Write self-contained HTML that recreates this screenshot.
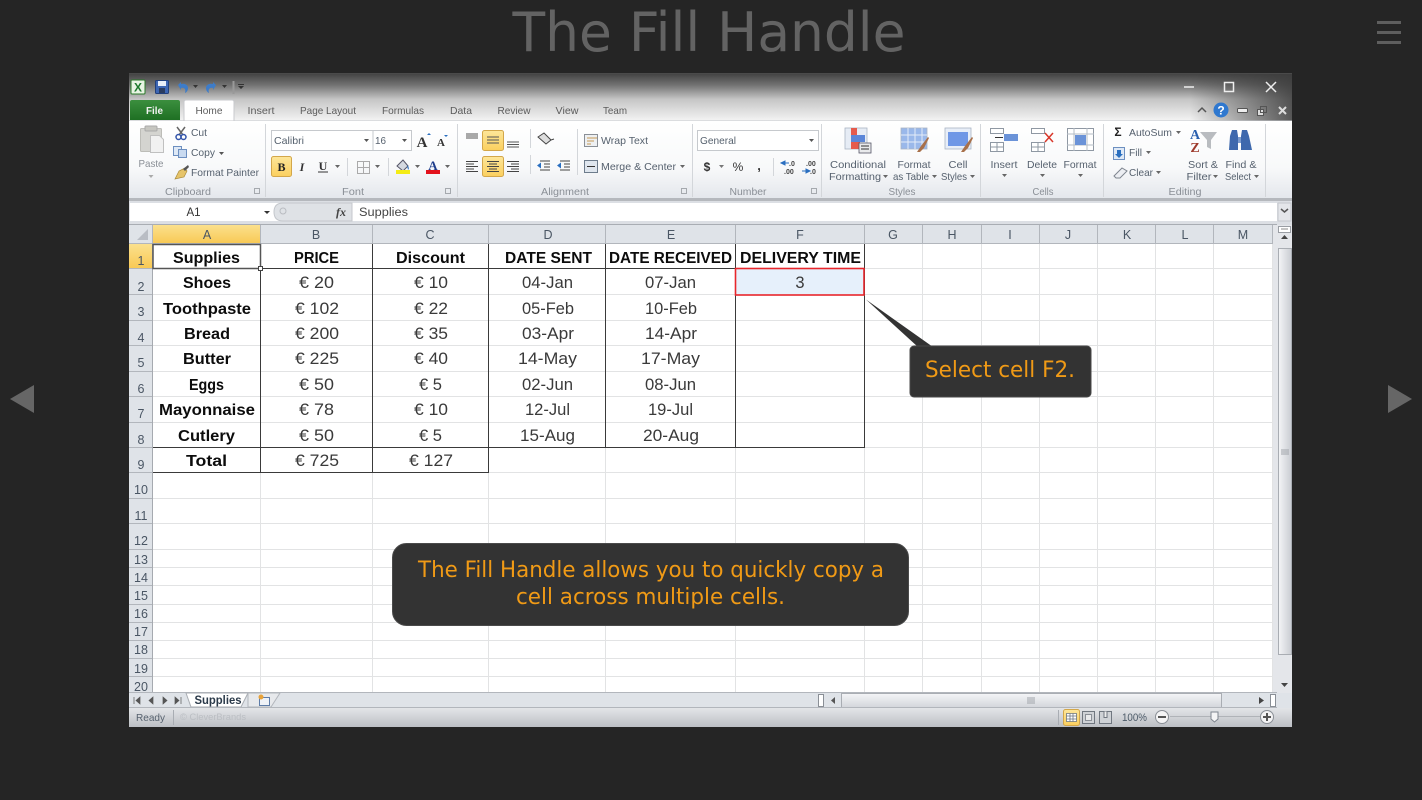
<!DOCTYPE html>
<html><head><meta charset="utf-8"><title>The Fill Handle</title>
<style>
html,body{margin:0;padding:0;background:#252525;width:1422px;height:800px;overflow:hidden}
svg{display:block;position:absolute;left:0;top:0;filter:blur(.3px)}
text{font-family:"Liberation Sans",sans-serif}
.c{font-size:16.5px;fill:#3a3a3a;text-anchor:middle}
.b{font-size:16px;font-weight:bold;fill:#0c0c0c;text-anchor:middle}
.r{font-size:10.5px;fill:#56616e}
.m{text-anchor:middle}
.g{font-size:10.5px;fill:#8a8f96;text-anchor:middle}
.h{font-size:12.5px;fill:#4a5664;text-anchor:middle}
.n{font-size:12.5px;fill:#4a5664;text-anchor:middle}
.t{font-size:10.5px;fill:#5c5c5c;text-anchor:middle}
.o{font-family:"DejaVu Sans",sans-serif;font-size:22px;fill:#f09a16;text-anchor:middle}
</style></head><body>
<svg width="1422" height="800" viewBox="0 0 1422 800" xmlns="http://www.w3.org/2000/svg">
<defs>
<linearGradient id="tb" x1="0" y1="0" x2="0" y2="1"><stop offset="0" stop-color="#404040"/><stop offset=".25" stop-color="#727272"/><stop offset=".55" stop-color="#c6c6c6"/><stop offset="1" stop-color="#f4f4f4"/></linearGradient>
<linearGradient id="sl" x1="0" y1="0" x2="1" y2="0"><stop offset="0" stop-color="#3c3c3c" stop-opacity="0"/><stop offset="1" stop-color="#3c3c3c" stop-opacity=".85"/></linearGradient>
<linearGradient id="rb" x1="0" y1="0" x2="0" y2="1"><stop offset="0" stop-color="#fff"/><stop offset=".6" stop-color="#f8f9fa"/><stop offset="1" stop-color="#e4e7ec"/></linearGradient>
<linearGradient id="st" x1="0" y1="0" x2="0" y2="1"><stop offset="0" stop-color="#e3e5e8"/><stop offset="1" stop-color="#bcbfc4"/></linearGradient>
<linearGradient id="yl" x1="0" y1="0" x2="0" y2="1"><stop offset="0" stop-color="#fde69a"/><stop offset="1" stop-color="#fbcf5e"/></linearGradient>
<linearGradient id="gr" x1="0" y1="0" x2="0" y2="1"><stop offset="0" stop-color="#3b8f3e"/><stop offset="1" stop-color="#1e6f23"/></linearGradient>
<linearGradient id="hy" x1="0" y1="0" x2="0" y2="1"><stop offset="0" stop-color="#fbe08d"/><stop offset="1" stop-color="#f8c853"/></linearGradient>
<linearGradient id="sb" x1="0" y1="0" x2="1" y2="0"><stop offset="0" stop-color="#f4f5f7"/><stop offset="1" stop-color="#c9ccd2"/></linearGradient>
<linearGradient id="hs" x1="0" y1="0" x2="0" y2="1"><stop offset="0" stop-color="#f4f5f7"/><stop offset="1" stop-color="#d3d6db"/></linearGradient>
</defs>

<rect width="1422" height="800" fill="#252525"/>
<text x="709" y="51" style="font-family:'DejaVu Sans',sans-serif;font-size:54px" fill="#636363" text-anchor="middle" textLength="393" lengthAdjust="spacingAndGlyphs">The Fill Handle</text>
<path d="M1377 21h24v3h-24zM1377 31h24v3h-24zM1377 41h24v3h-24z" fill="#5e5e5e"/>
<path d="M34 385v28L10 399z" fill="#666"/><path d="M1388 385v28l24-14z" fill="#666"/>

<!-- window -->
<rect x="129" y="73" width="1163" height="654" fill="#e4e6ea"/>
<rect x="129" y="73" width="1163" height="48" fill="url(#tb)"/>
<rect x="1190" y="73" width="102" height="48" fill="url(#sl)"/>
<rect x="129" y="73" width="1163" height="1" fill="#4a4a4a"/>

<!-- QAT -->
<rect x="131" y="80" width="14" height="14" rx="1" fill="#e8f4e4" stroke="#2a7a2a"/>
<text x="138" y="91.500" font-size="12" font-weight="bold" fill="#1c7a2c" class="m">X</text>
<rect x="155.500" y="80.500" width="13" height="13" rx="1" fill="#3d66b4" stroke="#22407c"/><rect x="158" y="81" width="8" height="5" fill="#e8eef8"/><rect x="159" y="88" width="6" height="5" fill="#2a3c60"/>
<path d="M178 85l3-3v2c4-1 7 1 7 4 0 2-1 4-3 5 1-3-0-6-4-5v2z" fill="#3d7cc9"/>
<path d="M216 85l-3-3v2c-4-1-7 1-7 4 0 2 1 4 3 5-1-3 0-6 4-5v2z" fill="#3d7cc9"/>
<path d="M193 85h5l-2.500 3zM222 85h5l-2.500 3z" fill="#333"/>
<path d="M233.500 81v13" stroke="#999" stroke-width="2"/><path d="M238 84h6v1h-6zM238 86h6l-3 3z" fill="#333"/>

<!-- window controls -->
<path d="M1184 87h10" stroke="#eee" stroke-width="1.500"/>
<rect x="1224.500" y="82.500" width="9" height="9" fill="none" stroke="#eee" stroke-width="1.500"/>
<path d="M1266 82l10 10M1276 82l-10 10" stroke="#eee" stroke-width="1.500"/>
<path d="M1198 112l4-4 4 4" fill="none" stroke="#555" stroke-width="1.500"/>
<circle cx="1221" cy="110" r="7.500" fill="#2f78cf"/><text x="1221" y="114.500" font-size="12" font-weight="bold" fill="#fff" class="m">?</text>
<rect x="1237.500" y="108.500" width="10" height="4" rx="1" fill="#eee" stroke="#555"/>
<rect x="1257.500" y="109.500" width="6" height="6" fill="#ddd" stroke="#555"/><rect x="1260.500" y="106.500" width="6" height="6" fill="none" stroke="#555"/>
<path d="M1279 107l7 7M1286 107l-7 7" stroke="#ddd" stroke-width="2"/>

<!-- tabs -->
<path d="M130 120v-18q0-2 2-2h46q2 0 2 2v18z" fill="url(#gr)"/>
<text x="154.500" y="114" font-size="10.500" font-weight="bold" fill="#f2f2f2" class="m" textLength="17" lengthAdjust="spacingAndGlyphs">File</text>
<rect x="129" y="120.500" width="1163" height="1" fill="#c4c7cc"/>
<path d="M184 121v-19q0-2 2-2h46q2 0 2 2v19z" fill="#fff" stroke="#c8cacd"/>
<text x="209" y="114" class="t" textLength="27" lengthAdjust="spacingAndGlyphs">Home</text>
<text x="261" y="114" class="t" textLength="27" lengthAdjust="spacingAndGlyphs">Insert</text>
<text x="328" y="114" class="t" textLength="56" lengthAdjust="spacingAndGlyphs">Page Layout</text>
<text x="403" y="114" class="t" textLength="42" lengthAdjust="spacingAndGlyphs">Formulas</text>
<text x="461" y="114" class="t" textLength="22" lengthAdjust="spacingAndGlyphs">Data</text>
<text x="514" y="114" class="t" textLength="33" lengthAdjust="spacingAndGlyphs">Review</text>
<text x="567" y="114" class="t" textLength="23" lengthAdjust="spacingAndGlyphs">View</text>
<text x="615" y="114" class="t" textLength="24" lengthAdjust="spacingAndGlyphs">Team</text>

<!-- ribbon -->
<rect x="129" y="121" width="1163" height="77" fill="url(#rb)"/>
<rect x="129" y="198" width="1163" height="3" fill="#b5b8bd"/>
<path d="M265.500 124v73M457.500 124v73M692.500 124v73M821.500 124v73M980.500 124v73M1103.500 124v73M1265.500 124v73" stroke="#d3d6da"/>
<text x="188" y="195" class="g" textLength="46" lengthAdjust="spacingAndGlyphs">Clipboard</text>
<text x="353" y="195" class="g" textLength="22" lengthAdjust="spacingAndGlyphs">Font</text>
<text x="565" y="195" class="g" textLength="48" lengthAdjust="spacingAndGlyphs">Alignment</text>
<text x="748" y="195" class="g" textLength="37" lengthAdjust="spacingAndGlyphs">Number</text>
<text x="902" y="195" class="g" textLength="27" lengthAdjust="spacingAndGlyphs">Styles</text>
<text x="1043" y="195" class="g" textLength="21" lengthAdjust="spacingAndGlyphs">Cells</text>
<text x="1185" y="195" class="g" textLength="33" lengthAdjust="spacingAndGlyphs">Editing</text>
<path d="M254.500 188.500h5v5h-5zM445.500 188.500h5v5h-5zM681.500 188.500h5v5h-5zM811.500 188.500h5v5h-5z" fill="none" stroke="#a5a9ae"/>

<!-- clipboard -->
<rect x="140.500" y="128.500" width="21" height="23" rx="1" fill="#d4d4d0" stroke="#bdbdb8"/><rect x="145" y="126" width="12" height="5" rx="1" fill="#c6c6c0" stroke="#aaa"/>
<path d="M150.500 135.500h9l4 4v13h-13z" fill="#f1f1f1" stroke="#c0c0c0"/>
<text x="151" y="167" class="g" textLength="25" lengthAdjust="spacingAndGlyphs">Paste</text><path d="M148.500 175h5l-2.500 3z" fill="#aaa"/>
<path d="M177 127l6 8M185 127l-6 8" stroke="#666" stroke-width="1.500"/><circle cx="178.500" cy="137" r="2.500" fill="none" stroke="#3355aa" stroke-width="1.500"/><circle cx="183.500" cy="137" r="2.500" fill="none" stroke="#3355aa" stroke-width="1.500"/>
<text x="191" y="136" class="r" textLength="16" lengthAdjust="spacingAndGlyphs">Cut</text>
<rect x="173.500" y="146.500" width="8" height="9" fill="#dfe9f6" stroke="#6d8fc0"/><rect x="178.500" y="149.500" width="8" height="8" fill="#c9daf0" stroke="#6d8fc0"/>
<text x="191" y="156" class="r" textLength="24" lengthAdjust="spacingAndGlyphs">Copy</text><path d="M219 152h5l-2.500 3z" fill="#555"/>
<path d="M175 179l4-8 6-3 2 3-3 6z" fill="#e6c46a" stroke="#a98b3a" stroke-width=".7"/><path d="M183 169l5-4 1 2-4 4z" fill="#555"/>
<text x="191" y="176" class="r" textLength="68" lengthAdjust="spacingAndGlyphs">Format Painter</text>

<!-- font -->
<rect x="271.500" y="130.500" width="140" height="20" fill="#fff" stroke="#c6c9cd"/><path d="M373 131v19" stroke="#c6c9cd"/>
<text x="274" y="144" class="r" textLength="30" lengthAdjust="spacingAndGlyphs">Calibri</text><path d="M364 139h5l-2.500 3z" fill="#555"/>
<text x="375" y="144" class="r" textLength="11" lengthAdjust="spacingAndGlyphs">16</text><path d="M402 139h5l-2.500 3z" fill="#555"/>
<text x="422" y="147" font-size="15" font-weight="bold" fill="#333" style="font-family:'Liberation Serif',serif" class="m">A</text><path d="M427 135l2-2 2 2z" fill="#2a6fc0"/>
<text x="441" y="146" font-size="11" font-weight="bold" fill="#333" style="font-family:'Liberation Serif',serif" class="m">A</text><path d="M444 135h4l-2 2z" fill="#2a6fc0"/>
<rect x="271.500" y="156.500" width="20" height="20" rx="2" fill="url(#yl)" stroke="#d3a74a"/>
<text x="281.500" y="171" font-size="12" font-weight="bold" fill="#222" style="font-family:'Liberation Serif',serif" class="m">B</text>
<text x="302" y="171" font-size="12" font-weight="bold" font-style="italic" fill="#333" style="font-family:'Liberation Serif',serif" class="m">I</text>
<text x="323" y="170" font-size="12" font-weight="bold" fill="#333" style="font-family:'Liberation Serif',serif" class="m">U</text><path d="M318 172h10" stroke="#333"/><path d="M335 165h5l-2.500 3zM375 165h5l-2.500 3zM415 165h5l-2.500 3zM445 165h5l-2.500 3z" fill="#666"/>
<path d="M347.500 158v18M388.500 158v18M530.500 129v19M530.500 155v19M577.500 129v46M773.500 158v18" stroke="#d3d6da"/>
<path d="M357.500 161.500h12v12h-12zM363.500 161.500v12M357.500 167.500h12" fill="none" stroke="#aaa"/>
<path d="M397 166l6-6 5 6-5 5z" fill="#d5d9e0" stroke="#556"/><path d="M407 165q3 3 1 5z" fill="#2a6fc0"/><rect x="396" y="170" width="14" height="4" fill="#f4ec15"/>
<text x="433" y="170" font-size="13" font-weight="bold" fill="#1e3e8c" style="font-family:'Liberation Serif',serif" class="m">A</text><rect x="426" y="170" width="14" height="4" fill="#e3121c"/>

<!-- alignment -->
<rect x="482.500" y="130.500" width="21" height="20" rx="2" fill="url(#yl)" stroke="#d3a74a"/>
<rect x="482.500" y="156.500" width="21" height="20" rx="2" fill="url(#yl)" stroke="#d3a74a"/>
<path d="M466 134h12M466 136h12M466 138h12M487 137h12M487 140h12M487 143h12M507 142h12M507 144.500h12M507 147h12" stroke="#555"/>
<path d="M466 161.500h12M466 164h8M466 166.500h12M466 169h8M466 171.500h12M487 161.500h12M489 164h8M487 166.500h12M489 169h8M487 171.500h12M507 161.500h12M511 164h8M507 166.500h12M511 169h8M507 171.500h12" stroke="#444"/>
<path d="M538 137l8 7 5-4-7-7zM551 140l3-1" fill="#ddd" stroke="#444"/>
<path d="M540 161h10M544 164h6M544 167h6M540 170h10M560 161h10M564 164h6M564 167h6M560 170h10" stroke="#444"/><path d="M537 165.500l4-3v6zM557 165.500l4-3v6z" fill="#2a6fc0"/>
<rect x="584.500" y="134.500" width="13" height="12" fill="#eef0f2" stroke="#8a8f96"/><path d="M587 138h10M587 141h7M587 144h4" stroke="#c69a55"/>
<text x="601" y="144" class="r" textLength="47" lengthAdjust="spacingAndGlyphs">Wrap Text</text>
<rect x="584.500" y="160.500" width="13" height="12" fill="#dfe6ee" stroke="#6d7c8c"/><path d="M587 166.500h8" stroke="#333"/>
<text x="601" y="170" class="r" textLength="75" lengthAdjust="spacingAndGlyphs">Merge &amp; Center</text><path d="M680 165h5l-2.500 3z" fill="#666"/>

<!-- number -->
<rect x="697.500" y="130.500" width="121" height="20" fill="#fff" stroke="#c6c9cd"/>
<text x="700" y="144" class="r" textLength="36" lengthAdjust="spacingAndGlyphs">General</text><path d="M809 139h5l-2.500 3z" fill="#555"/>
<text x="707" y="171" font-size="12" font-weight="bold" fill="#333" class="m">$</text><path d="M719 165h5l-2.500 3z" fill="#777"/>
<text x="738" y="171" font-size="12" fill="#333" class="m">%</text>
<text x="759" y="170" font-size="13" font-weight="bold" fill="#333" class="m">,</text>
<text x="789" y="166" font-size="7" font-weight="bold" fill="#444">.0</text><text x="784" y="174" font-size="7" font-weight="bold" fill="#444">.00</text><path d="M781 163l4-2v4zM785 163h4" stroke="#2a6fc0" fill="#2a6fc0"/>
<text x="806" y="166" font-size="7" font-weight="bold" fill="#444">.00</text><text x="810" y="174" font-size="7" font-weight="bold" fill="#444">.0</text><path d="M802 171h4M810 171l-4-2v4z" stroke="#2a6fc0" fill="#2a6fc0"/>

<!-- styles -->
<rect x="845" y="128" width="22" height="21" fill="#e6ecf5" stroke="#a9b4c4" stroke-width=".8"/>
<rect x="851" y="128" width="6" height="7" fill="#e55b4d"/><rect x="851" y="135" width="14" height="7" fill="#5b86d8"/><rect x="851" y="142" width="9" height="7" fill="#e55b4d"/>
<rect x="859" y="143" width="12" height="10" fill="#e9eaec" stroke="#556" stroke-width=".8"/><path d="M861 146h8M861 149h8" stroke="#333"/>
<text x="858" y="168" class="r m" textLength="56" lengthAdjust="spacingAndGlyphs">Conditional</text>
<text x="855" y="180" class="r m" textLength="52" lengthAdjust="spacingAndGlyphs">Formatting</text><path d="M883 175h5l-2.500 3z" fill="#666"/>
<rect x="901" y="128" width="26" height="21" fill="#9ab8ea" stroke="#a9b4c4" stroke-width=".8"/><path d="M901 135h26M901 142h26M908 128v21M915 128v21M922 128v21" stroke="#e4ecf8"/>
<path d="M917 152l4-6 7-9 1 1-5 10-4 4z" fill="#a8704a"/>
<text x="914" y="168" class="r m" textLength="33" lengthAdjust="spacingAndGlyphs">Format</text>
<text x="911" y="180" class="r m" textLength="36" lengthAdjust="spacingAndGlyphs">as Table</text><path d="M932 175h5l-2.500 3z" fill="#666"/>
<rect x="945" y="128" width="26" height="21" fill="#e8eef8" stroke="#a9b4c4" stroke-width=".8"/><rect x="948" y="132" width="20" height="14" fill="#6f97e6"/>
<path d="M961 152l4-6 7-9 1 1-5 10-4 4z" fill="#a8704a"/>
<text x="958" y="168" class="r m" textLength="19" lengthAdjust="spacingAndGlyphs">Cell</text>
<text x="954" y="180" class="r m" textLength="26" lengthAdjust="spacingAndGlyphs">Styles</text><path d="M970 175h5l-2.500 3z" fill="#666"/>

<!-- cells -->
<path d="M990.500 128.500h13v5h-13zM990.500 142.500h13v9h-13zM997 142.500v9M990.500 147h13" fill="#fff" stroke="#8f98a3"/><rect x="1004" y="134" width="14" height="7" fill="#6b93d8"/><path d="M995 137.500h8" stroke="#333"/>
<path d="M1031.500 128.500h13v5h-13zM1031.500 142.500h13v9h-13zM1038 142.500v9M1031.500 147h13" fill="#fff" stroke="#8f98a3"/><path d="M1045 133l8 9M1053 133l-8 9" stroke="#d9372a" stroke-width="1.500"/>
<rect x="1067.500" y="128.500" width="26" height="22" fill="#fff" stroke="#8f98a3"/><path d="M1067 134h27M1067 145h27M1074 128v23M1087 128v23" stroke="#b5bcc5"/><rect x="1075" y="135" width="11" height="10" fill="#6b93d8"/>
<text x="1004" y="168" class="r m" textLength="27" lengthAdjust="spacingAndGlyphs">Insert</text>
<text x="1042" y="168" class="r m" textLength="30" lengthAdjust="spacingAndGlyphs">Delete</text>
<text x="1080" y="168" class="r m" textLength="33" lengthAdjust="spacingAndGlyphs">Format</text>
<path d="M1002 174h5l-2.500 3zM1040 174h5l-2.500 3zM1078 174h5l-2.500 3z" fill="#666"/>

<!-- editing -->
<text x="1118" y="136" font-size="12" font-weight="bold" fill="#222" class="m">Σ</text>
<text x="1129" y="136" class="r" textLength="43" lengthAdjust="spacingAndGlyphs">AutoSum</text><path d="M1176 131h5l-2.500 3z" fill="#666"/>
<rect x="1113.500" y="147.500" width="11" height="12" fill="#dfe9f6" stroke="#6d8fc0"/><path d="M1117 150h4v4h2l-4 4-4-4h2z" fill="#2a6fc0"/>
<text x="1129" y="156" class="r" textLength="13" lengthAdjust="spacingAndGlyphs">Fill</text><path d="M1146 151h5l-2.500 3z" fill="#666"/>
<path d="M1114 176l8-8 5 3-7 7h-4z" fill="#eceef2" stroke="#7e858e"/>
<text x="1129" y="176" class="r" textLength="24" lengthAdjust="spacingAndGlyphs">Clear</text><path d="M1156 171h5l-2.500 3z" fill="#666"/>
<text x="1195" y="139" font-size="14" font-weight="bold" fill="#2a5fae" style="font-family:'Liberation Serif',serif" class="m">A</text>
<text x="1195" y="152" font-size="14" font-weight="bold" fill="#9e3a2c" style="font-family:'Liberation Serif',serif" class="m">Z</text>
<path d="M1200 132h17l-6 8v9l-4-2v-7z" fill="#b9bcc0"/>
<text x="1203" y="168" class="r m" textLength="30" lengthAdjust="spacingAndGlyphs">Sort &amp;</text>
<text x="1199" y="180" class="r m" textLength="25" lengthAdjust="spacingAndGlyphs">Filter</text><path d="M1213 175h5l-2.500 3z" fill="#666"/>
<path d="M1230 136l2-6h5l1 6v14h-9zM1241 136l1-6h5l2 6 3 14h-11z" fill="#3e68ad"/><rect x="1238" y="137" width="3" height="6" fill="#7c9bcd"/>
<text x="1241" y="168" class="r m" textLength="31" lengthAdjust="spacingAndGlyphs">Find &amp;</text>
<text x="1238" y="180" class="r m" textLength="26" lengthAdjust="spacingAndGlyphs">Select</text><path d="M1254 175h5l-2.500 3z" fill="#666"/>

<!-- formula bar -->
<rect x="129" y="201" width="1163" height="24" fill="#dcdfe4"/>
<rect x="130" y="203" width="1147" height="18" fill="#fff"/>
<path d="M264 211h6l-3 3z" fill="#333"/><text x="193.500" y="216" class="r" font-size="11.500" style="font-size:11.500px;fill:#333" text-anchor="middle">A1</text>
<path d="M352 203H283q-9 0-9 9t9 9h69z" fill="#dfe2e6" stroke="#c4c7cc"/><circle cx="283" cy="211" r="3" fill="none" stroke="#b9bcc1"/>
<text x="341" y="216" font-size="12" font-style="italic" font-weight="bold" fill="#444" style="font-family:'Liberation Serif',serif" class="m">fx</text>
<text x="359" y="216" font-size="11.500" fill="#444" textLength="49" lengthAdjust="spacingAndGlyphs">Supplies</text>
<path d="M1278 203h13v18h-13z" fill="#e4e6ea" stroke="#c4c7cc"/><path d="M1281 209l3.500 3 3.500-3" fill="none" stroke="#555" stroke-width="1.500"/>

<!-- sheet -->
<rect x="153" y="244" width="1124" height="449" fill="#fff"/>
<rect x="129" y="225" width="1148" height="19" fill="#dfe3e8"/>
<rect x="129" y="244" width="24" height="449" fill="#dfe3e8"/>
<path d="M148 229v11h-11z" fill="#b9bdc4"/>
<rect x="153" y="225" width="108" height="19" fill="url(#hy)"/>
<rect x="129" y="244" width="24" height="25" fill="url(#hy)"/>
<path d="M129 224.500h1148" stroke="#a9adb3"/>
<path d="M152.500 225v19M260.500 225v19M372.500 225v19M488.500 225v19M605.500 225v19M735.500 225v19M864.500 225v19M922.500 225v19M981.500 225v19M1039.500 225v19M1097.500 225v19M1155.500 225v19M1213.500 225v19M1272.500 225v19" stroke="#b2b6bc"/>
<path d="M129 243.500h1148" stroke="#b2b6bc"/>
<path d="M129 268.500h24M129 294.500h24M129 320.500h24M129 345.500h24M129 371.500h24M129 396.500h24M129 422.500h24M129 447.500h24M129 472.500h24M129 498.500h24M129 523.500h24M129 549.500h24M129 567.500h24M129 585.500h24M129 604.500h24M129 622.500h24M129 640.500h24M129 658.500h24M129 676.500h24" stroke="#b2b6bc"/>
<path d="M152.500 244v449" stroke="#a6aab0"/>
<!-- grid -->
<path d="M153 268.500h1124M153 294.500h1124M153 320.500h1124M153 345.500h1124M153 371.500h1124M153 396.500h1124M153 422.500h1124M153 447.500h1124M153 472.500h1124M153 498.500h1124M153 523.500h1124M153 549.500h1124M153 567.500h1124M153 585.500h1124M153 604.500h1124M153 622.500h1124M153 640.500h1124M153 658.500h1124M153 676.500h1124" stroke="#e2e3e4"/>
<path d="M260.500 244v449M372.500 244v449M488.500 244v449M605.500 244v449M735.500 244v449M864.500 244v449M922.500 244v449M981.500 244v449M1039.500 244v449M1097.500 244v449M1155.500 244v449M1213.500 244v449M1272.500 244v449" stroke="#e2e3e4"/>
<!-- table borders -->
<path d="M153 268.500h712M153 447.500h712M153 472.500h336M260.500 244v229M372.500 244v229M488.500 244v229M605.500 244v204M735.500 244v204M864.500 244v204" stroke="#3a3a3a" fill="none"/>
<rect x="736" y="269" width="128" height="26" fill="#e6f0fb"/>
<rect x="735.500" y="268.500" width="128.500" height="26.500" fill="none" stroke="#e8262c" stroke-width="1.600"/>
<rect x="153" y="244.500" width="107.500" height="24" fill="none" stroke="#555" stroke-width="1.500"/>
<rect x="258.500" y="266.500" width="4" height="4" fill="#fff" stroke="#444"/>

<!-- headers text -->
<text x="207" y="239" class="h">A</text><text x="316" y="239" class="h">B</text><text x="430" y="239" class="h">C</text><text x="548" y="239" class="h">D</text><text x="671" y="239" class="h">E</text><text x="800" y="239" class="h">F</text><text x="893" y="239" class="h">G</text><text x="952" y="239" class="h">H</text><text x="1010" y="239" class="h">I</text><text x="1068" y="239" class="h">J</text><text x="1127" y="239" class="h">K</text><text x="1185" y="239" class="h">L</text><text x="1243" y="239" class="h">M</text>
<text x="141" y="265" class="n">1</text><text x="141" y="291" class="n">2</text><text x="141" y="316" class="n">3</text><text x="141" y="342" class="n">4</text><text x="141" y="367" class="n">5</text><text x="141" y="393" class="n">6</text><text x="141" y="418" class="n">7</text><text x="141" y="444" class="n">8</text><text x="141" y="469" class="n">9</text><text x="141" y="494" class="n">10</text><text x="141" y="520" class="n">11</text><text x="141" y="545" class="n">12</text><text x="141" y="564" class="n">13</text><text x="141" y="582" class="n">14</text><text x="141" y="600" class="n">15</text><text x="141" y="618" class="n">16</text><text x="141" y="636" class="n">17</text><text x="141" y="654" class="n">18</text><text x="141" y="673" class="n">19</text><text x="141" y="691" class="n">20</text>

<!-- cells text -->
<text x="206.500" y="263" class="b" textLength="67" lengthAdjust="spacingAndGlyphs">Supplies</text>
<text x="316.500" y="263" class="b" textLength="45" lengthAdjust="spacingAndGlyphs">PRICE</text>
<text x="430.500" y="263" class="b" textLength="69" lengthAdjust="spacingAndGlyphs">Discount</text>
<text x="548.500" y="263" class="b" textLength="87" lengthAdjust="spacingAndGlyphs">DATE SENT</text>
<text x="670.500" y="263" class="b" textLength="123" lengthAdjust="spacingAndGlyphs">DATE RECEIVED</text>
<text x="800.500" y="263" class="b" textLength="121" lengthAdjust="spacingAndGlyphs">DELIVERY TIME</text>
<text x="207" y="288" class="b" textLength="48" lengthAdjust="spacingAndGlyphs">Shoes</text>
<text x="207" y="314" class="b" textLength="88" lengthAdjust="spacingAndGlyphs">Toothpaste</text>
<text x="207" y="339" class="b" textLength="46" lengthAdjust="spacingAndGlyphs">Bread</text>
<text x="207" y="364" class="b" textLength="48" lengthAdjust="spacingAndGlyphs">Butter</text>
<text x="206.500" y="390" class="b" textLength="35" lengthAdjust="spacingAndGlyphs">Eggs</text>
<text x="207" y="415" class="b" textLength="96" lengthAdjust="spacingAndGlyphs">Mayonnaise</text>
<text x="206.500" y="441" class="b" textLength="57" lengthAdjust="spacingAndGlyphs">Cutlery</text>
<text x="206.500" y="466" class="b" textLength="41" lengthAdjust="spacingAndGlyphs">Total</text>
<text x="316.500" y="288" class="c" textLength="35" lengthAdjust="spacingAndGlyphs">€ 20</text>
<text x="317" y="314" class="c" textLength="44" lengthAdjust="spacingAndGlyphs">€ 102</text>
<text x="317" y="339" class="c" textLength="44" lengthAdjust="spacingAndGlyphs">€ 200</text>
<text x="317" y="364" class="c" textLength="44" lengthAdjust="spacingAndGlyphs">€ 225</text>
<text x="316.500" y="390" class="c" textLength="35" lengthAdjust="spacingAndGlyphs">€ 50</text>
<text x="316.500" y="415" class="c" textLength="35" lengthAdjust="spacingAndGlyphs">€ 78</text>
<text x="316.500" y="441" class="c" textLength="35" lengthAdjust="spacingAndGlyphs">€ 50</text>
<text x="317" y="466" class="c" textLength="44" lengthAdjust="spacingAndGlyphs">€ 725</text>
<text x="431" y="288" class="c" textLength="34" lengthAdjust="spacingAndGlyphs">€ 10</text>
<text x="431" y="314" class="c" textLength="34" lengthAdjust="spacingAndGlyphs">€ 22</text>
<text x="431" y="339" class="c" textLength="34" lengthAdjust="spacingAndGlyphs">€ 35</text>
<text x="431" y="364" class="c" textLength="34" lengthAdjust="spacingAndGlyphs">€ 40</text>
<text x="430.500" y="390" class="c" textLength="23" lengthAdjust="spacingAndGlyphs">€ 5</text>
<text x="431" y="415" class="c" textLength="34" lengthAdjust="spacingAndGlyphs">€ 10</text>
<text x="430.500" y="441" class="c" textLength="23" lengthAdjust="spacingAndGlyphs">€ 5</text>
<text x="431" y="466" class="c" textLength="44" lengthAdjust="spacingAndGlyphs">€ 127</text>
<text x="547.500" y="288" class="c" textLength="51" lengthAdjust="spacingAndGlyphs">04-Jan</text>
<text x="548" y="314" class="c" textLength="52" lengthAdjust="spacingAndGlyphs">05-Feb</text>
<text x="548" y="339" class="c" textLength="52" lengthAdjust="spacingAndGlyphs">03-Apr</text>
<text x="547.500" y="364" class="c" textLength="59" lengthAdjust="spacingAndGlyphs">14-May</text>
<text x="547.500" y="390" class="c" textLength="51" lengthAdjust="spacingAndGlyphs">02-Jun</text>
<text x="547.500" y="415" class="c" textLength="45" lengthAdjust="spacingAndGlyphs">12-Jul</text>
<text x="547.500" y="441" class="c" textLength="55" lengthAdjust="spacingAndGlyphs">15-Aug</text>
<text x="670.500" y="288" class="c" textLength="51" lengthAdjust="spacingAndGlyphs">07-Jan</text>
<text x="671" y="314" class="c" textLength="52" lengthAdjust="spacingAndGlyphs">10-Feb</text>
<text x="671" y="339" class="c" textLength="52" lengthAdjust="spacingAndGlyphs">14-Apr</text>
<text x="670.500" y="364" class="c" textLength="59" lengthAdjust="spacingAndGlyphs">17-May</text>
<text x="670.500" y="390" class="c" textLength="51" lengthAdjust="spacingAndGlyphs">08-Jun</text>
<text x="670.500" y="415" class="c" textLength="45" lengthAdjust="spacingAndGlyphs">19-Jul</text>
<text x="671" y="441" class="c" textLength="56" lengthAdjust="spacingAndGlyphs">20-Aug</text>
<text x="800" y="288" class="c">3</text>

<!-- vertical scrollbar -->
<rect x="1273" y="225" width="19" height="468" fill="#e4e6ea"/>
<rect x="1278.500" y="226.500" width="12" height="6" fill="#fff" stroke="#9a9ea4"/><path d="M1281 229h7" stroke="#888"/>
<path d="M1281 239l3.500-4 3.500 4z" fill="#444"/>
<rect x="1278.500" y="248.500" width="13" height="406" fill="url(#sb)" stroke="#a9adb3"/>
<path d="M1281 450h8M1281 452h8M1281 454h8" stroke="#a0a4aa"/>
<path d="M1281 683l3.500 4 3.500-4z" fill="#444"/>

<!-- sheet tabs -->
<rect x="129" y="693" width="1163" height="15" fill="#dfe3e8"/><path d="M129 692.500h1148" stroke="#b2b6bc"/>
<path d="M134 697v7M140 697l-4 3.500 4 3.500zM153 697l-4 3.500 4 3.500zM163 697l4 3.500-4 3.500zM175 697l4 3.500-4 3.500zM181 697v7" fill="#555" stroke="#555" stroke-width=".7"/>
<path d="M186 693h62l-7 14h-50z" fill="#fff" stroke="#a9adb3"/>
<text x="218" y="704" font-size="11.500" font-weight="bold" fill="#2b3a4a" class="m" textLength="47" lengthAdjust="spacingAndGlyphs">Supplies</text>
<path d="M248 693h32l-9 14h-23z" fill="#e7e9ec" stroke="#b2b6bc"/>
<rect x="259.500" y="697.500" width="10" height="8" fill="#eef2f7" stroke="#5d7ca8"/><circle cx="261" cy="697" r="2.500" fill="#e8a33a"/>
<rect x="818.500" y="694.500" width="5" height="12" fill="#fff" stroke="#8a8f96"/>
<path d="M835 697l-4 3.500 4 3.500z" fill="#555"/>
<rect x="841.500" y="693.500" width="380" height="14" fill="url(#hs)" stroke="#a9adb3"/>
<path d="M1028 697v7M1030 697v7M1032 697v7M1034 697v7" stroke="#a0a4aa"/>
<path d="M1259 697l5 3.500-5 3.500z" fill="#444"/>
<rect x="1270.500" y="694.500" width="5" height="12" fill="#fff" stroke="#8a8f96"/>

<!-- status bar -->
<rect x="129" y="708" width="1163" height="19" fill="url(#st)"/><path d="M129 707.500h1148" stroke="#b2b6bc"/>
<text x="136" y="721" class="r" textLength="29" lengthAdjust="spacingAndGlyphs">Ready</text>
<path d="M173.500 710v15M1058.500 710v15" stroke="#a9adb3"/>
<text x="180" y="720" font-size="9.500" fill="#bbbec3" textLength="66" lengthAdjust="spacingAndGlyphs">© CleverBrands</text>
<rect x="1063.500" y="709.500" width="16" height="16" rx="2" fill="url(#yl)" stroke="#d3a74a"/>
<path d="M1066.500 713.500h10v8h-10zM1066.500 716h10M1066.500 719h10M1070 713.500v8M1073 713.500v8" fill="#fff" stroke="#6b7580" stroke-width=".8"/>
<rect x="1082.500" y="711.500" width="12" height="12" fill="#cfd2d6" stroke="#707780"/><rect x="1085.500" y="714.500" width="6" height="6" fill="#e9eaec" stroke="#8a8f96"/>
<rect x="1099.500" y="711.500" width="12" height="12" fill="#cfd2d6" stroke="#707780"/><path d="M1104 711.500v6h3v-6" fill="#eee" stroke="#707780"/>
<text x="1134.500" y="721" font-size="11" fill="#4c5a68" class="m" textLength="25" lengthAdjust="spacingAndGlyphs">100%</text>
<path d="M1170 716.500h90" stroke="#b0b3b8"/>
<circle cx="1162" cy="717" r="6.500" fill="#f4f4f5" stroke="#8a8f96"/><path d="M1158 717h8" stroke="#555" stroke-width="2"/>
<circle cx="1267" cy="717" r="6.500" fill="#f4f4f5" stroke="#8a8f96"/><path d="M1263 717h8M1267 713v8" stroke="#555" stroke-width="2"/>
<path d="M1211 712h7v7l-3.500 3-3.500-3z" fill="#f4f4f5" stroke="#7e858e"/>

<!-- callouts -->
<path d="M866 299.500L918 347H933z" fill="#333"/>
<rect x="910" y="346" width="181" height="51" rx="4" fill="#333" stroke="#4a4a4a"/>
<text x="1000" y="377" class="o" textLength="150" lengthAdjust="spacingAndGlyphs">Select cell F2.</text>
<rect x="392.500" y="543.500" width="516" height="82" rx="14" fill="#333" stroke="#4a4a4a"/>
<text x="651" y="577" class="o" textLength="466" lengthAdjust="spacingAndGlyphs">The Fill Handle allows you to quickly copy a</text>
<text x="650.500" y="604" class="o" textLength="269" lengthAdjust="spacingAndGlyphs">cell across multiple cells.</text>
</svg>
</body></html>
